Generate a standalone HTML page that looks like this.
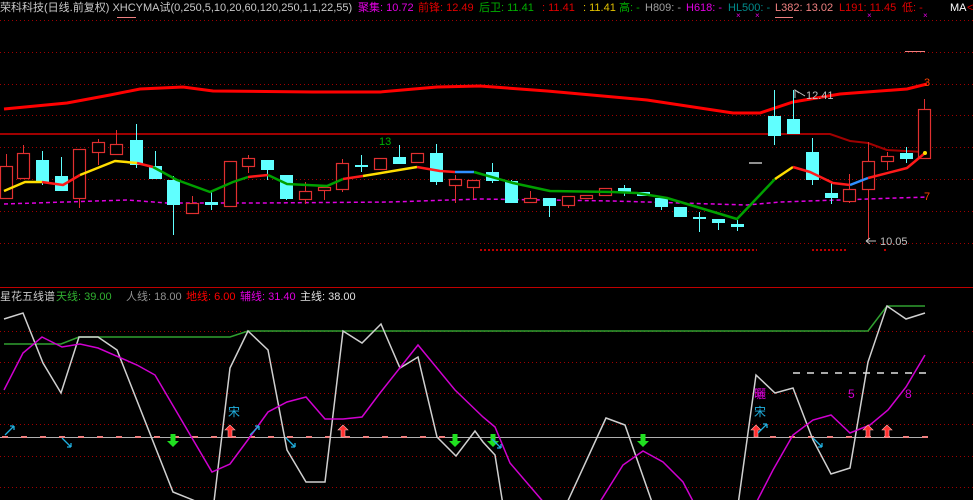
<!DOCTYPE html>
<html><head><meta charset="utf-8"><style>
html,body{margin:0;padding:0;background:#000;width:973px;height:500px;overflow:hidden}
.t{position:absolute;font-family:"Liberation Sans","Noto Sans CJK SC",sans-serif;font-size:11px;white-space:nowrap;line-height:14px}
svg{position:absolute;left:0;top:0}
</style></head><body>
<svg id="s" width="973" height="500" xmlns="http://www.w3.org/2000/svg">
<g stroke="#a00000" stroke-dasharray="1 3" stroke-width="1">
<line x1="0" y1="20.5" x2="973" y2="20.5"/><line x1="0" y1="52.5" x2="973" y2="52.5"/>
<line x1="0" y1="84.5" x2="973" y2="84.5"/><line x1="0" y1="115.5" x2="973" y2="115.5"/>
<line x1="0" y1="147.5" x2="973" y2="147.5"/><line x1="0" y1="179.5" x2="973" y2="179.5"/>
<line x1="0" y1="211.5" x2="973" y2="211.5"/><line x1="0" y1="243.5" x2="973" y2="243.5"/>
<line x1="0" y1="331.5" x2="973" y2="331.5"/><line x1="0" y1="362.5" x2="973" y2="362.5"/>
<line x1="0" y1="393.5" x2="973" y2="393.5"/><line x1="0" y1="424.5" x2="973" y2="424.5"/>
<line x1="0" y1="456.5" x2="973" y2="456.5"/><line x1="0" y1="487.5" x2="973" y2="487.5"/>
</g>
<g stroke="#c00000" stroke-width="2" stroke-dasharray="2 2">
<line x1="480" y1="250" x2="757" y2="250"/><line x1="812" y1="250" x2="848" y2="250"/><line x1="884" y1="250" x2="888" y2="250"/>
</g>
<line x1="905" y1="51.5" x2="925" y2="51.5" stroke="#f08080"/>
<line x1="0" y1="287.5" x2="973" y2="287.5" stroke="#c00000"/>
<polyline fill="none" stroke="#a00000" stroke-width="2" points="0,134 830,134 850,141 868,143 887,150 923,152"/>
<polyline fill="none" stroke="#ff0000" stroke-width="3" points="4,109 67,103 110,95 140,89 183,87 213,91 313,92 380,92 437,87 480,86 547,91 647,100 733,113 760,113 793,102 840,94 907,89 927,84"/>
<polyline fill="none" stroke="#e000e0" stroke-width="1.5" stroke-dasharray="4 3" points="4,204 127,200 167,203 260,203 390,202 480,199 613,201 680,203 747,205 780,202 927,197"/>
<g id="candles"></g>
<g fill="none" stroke-width="2.5" stroke-linejoin="round">
<polyline stroke="#ffdd00" points="4,191 25,182 42,182"/>
<polyline stroke="#ff1a1a" points="42,182 63,185 80,175"/>
<polyline stroke="#ffdd00" points="80,175 115,161 137,163"/>
<polyline stroke="#ff1a1a" points="137,163 153,167"/>
<polyline stroke="#00a000" points="153,167 177,180 210,192 233,182 248,177"/>
<polyline stroke="#ff1a1a" points="248,177 268,175"/>
<polyline stroke="#00a000" points="268,175 287,184 327,186 343,179"/>
<polyline stroke="#ff1a1a" points="343,179 363,176"/>
<polyline stroke="#ffdd00" points="363,176 417,167"/>
<polyline stroke="#ff1a1a" points="417,167 440,171 455,172"/>
<polyline stroke="#3090ff" points="455,172 474,172"/>
<polyline stroke="#00a000" points="474,172 513,183 550,191 613,192 637,193 667,198 737,219 775,179"/>
<polyline stroke="#ffdd00" points="775,179 793,167"/>
<polyline stroke="#ff1a1a" points="793,167 810,172 833,183 850,185"/>
<polyline stroke="#3090ff" points="850,185 868,178"/>
<polyline stroke="#ff1a1a" points="868,178 907,168 925,153"/>
</g>
<circle cx="925" cy="153" r="2" fill="#ffdd00"/>
<line x1="749" y1="163" x2="762" y2="163" stroke="#c0c0c0" stroke-width="1.5"/>
<path d="M795 98 v-8 l4 3 M795 90 l10 6" stroke="#c0c0c0" fill="none"/>
<path d="M866 241 l4 -3 M866 241 l4 3 M866 241 h10" stroke="#c0c0c0" fill="none"/>
<text x="379" y="145" fill="#00b000" font-family="Liberation Sans" font-size="11">13</text>
<text x="806" y="99" fill="#c0c0c0" font-family="Liberation Sans" font-size="11">12.41</text>
<text x="880" y="245" fill="#c0c0c0" font-family="Liberation Sans" font-size="11">10.05</text>
<text x="924" y="86" fill="#ff4000" font-family="Liberation Sans" font-size="11">3</text>
<text x="924" y="200" fill="#ff4000" font-family="Liberation Sans" font-size="11">7</text>
<line x1="117" y1="17.5" x2="136" y2="17.5" stroke="#f08080"/>
<line x1="775" y1="17.5" x2="793" y2="17.5" stroke="#f08080"/>
<g fill="#e000e0" font-size="8" font-family="Liberation Sans"><text x="736" y="18">×</text><text x="755" y="18">×</text><text x="867" y="18">×</text><text x="923" y="18">×</text></g>
<line x1="0" y1="437.5" x2="925" y2="437.5" stroke="#b0b0b0"/>
<g stroke="#f08080" stroke-width="2" id="dash"></g>
<polyline fill="none" stroke="#30a030" stroke-width="1.5" points="4,344 61,344 79,337 230,337 248,331 868,331 887,306 925,306"/>
<polyline fill="none" stroke="#d0d0d0" stroke-width="1.5" points="4,319 23,313 43,363 61,393 79,337 98,337 117,350 173,492 193,500 213,510 230,368 248,331 268,350 287,450 306,482 325,482 343,331 362,343 381,324 400,368 418,357 437,437 456,456 475,431 483,442 495,455 503,505 566,505 606,418 625,425 653,505 738,505 756,375 775,393 793,388 813,440 831,474 850,468 868,362 887,306 906,319 925,313"/>
<polyline fill="none" stroke="#d000d0" stroke-width="1.5" points="4,390 23,353 42,337 62,347 80,344 98,348 137,365 155,375 212,472 230,464 250,437 268,412 287,402 306,397 325,419 343,419 362,417 380,393 418,345 455,390 483,417 495,427 510,463 546,505 598,505 623,465 643,451 663,462 683,482 695,505 755,505 773,470 793,435 813,420 831,415 850,433 870,425 888,410 906,387 925,355"/>
<line x1="793" y1="373" x2="932" y2="373" stroke="#e0e0e0" stroke-width="1.5" stroke-dasharray="7 7"/>
<g id="arrows"></g>
<text x="228" y="416" fill="#20b0e0" font-size="12" font-family="Noto Sans CJK SC">宋</text>
<text x="754" y="416" fill="#20b0e0" font-size="12" font-family="Noto Sans CJK SC">宋</text>
<text x="754" y="398" fill="#e000e0" font-size="12" font-family="Noto Sans CJK SC">曬</text>
<text x="848" y="398" fill="#d000d0" font-size="12" font-family="Liberation Sans">5</text>
<text x="905" y="398" fill="#d000d0" font-size="12" font-family="Liberation Sans">8</text>
</svg>
<div class="t" style="left:0;top:1px;color:#c8c8c8">荣科科技(日线.前复权) XHCYMA试(0,250,5,10,20,60,120,250,1,1,22,55)</div>
<div class="t" style="left:358px;top:1px;color:#e000e0">聚集: 10.72</div>
<div class="t" style="left:418px;top:1px;color:#e00000">前锋: 12.49</div>
<div class="t" style="left:479px;top:1px;color:#00b000">后卫: 11.41</div>
<div class="t" style="left:542px;top:1px;color:#e00000">: 11.41</div>
<div class="t" style="left:583px;top:1px;color:#e0c000">: 11.41</div>
<div class="t" style="left:619px;top:1px;color:#00b000">高: -</div>
<div class="t" style="left:645px;top:1px;color:#a0a0a0">H809: -</div>
<div class="t" style="left:686px;top:1px;color:#e000e0">H618: -</div>
<div class="t" style="left:728px;top:1px;color:#008b8b">HL500: -</div>
<div class="t" style="left:775px;top:1px;color:#f08080">L382: 13.02</div>
<div class="t" style="left:839px;top:1px;color:#e00000">L191: 11.45</div>
<div class="t" style="left:902px;top:1px;color:#e00000">低: -</div>
<div class="t" style="left:950px;top:1px;color:#ffffff">MA</div>
<div class="t" style="left:967px;top:1px;color:#e00000">&lt;</div>
<div class="t" style="left:0;top:290px;color:#c8c8c8">星花五线谱</div>
<div class="t" style="left:56px;top:290px;color:#30b030">天线: 39.00</div>
<div class="t" style="left:126px;top:290px;color:#909090">人线: 18.00</div>
<div class="t" style="left:186px;top:290px;color:#ff0000">地线: 6.00</div>
<div class="t" style="left:240px;top:290px;color:#e000e0">辅线: 31.40</div>
<div class="t" style="left:300px;top:290px;color:#e0e0e0">主线: 38.00</div>
<script>
var C=[[0,'r',166,198,154,198],[17,'r',153,178,145,178],[36,'c',160,182,151,185],[55,'c',176,191,157,191],[73,'r',149,198,149,208],[92,'r',142,152,139,165],[110,'r',144,154,130,154],[130,'c',140,165,124,168],[149,'c',166,179,151,179],[167,'c',180,205,176,235],[186,'r',203,213,196,213],[205,'c',202,205,192,210],[224,'r',161,206,161,206],[242,'r',158,166,155,173],[261,'c',160,170,160,180],[280,'c',175,199,175,200],[299,'r',191,199,182,204],[318,'r',187,190,187,200],[336,'r',163,189,159,192],[355,'c',165,167,155,172],[374,'r',158,169,158,169],[393,'c',157,164,145,164],[411,'r',153,162,153,162],[430,'c',153,182,144,185],[449,'r',179,185,175,203],[467,'r',180,187,180,199],[486,'c',172,181,163,183],[505,'c',181,203,180,203],[524,'r',198,202,191,202],[543,'c',198,206,198,217],[562,'r',196,205,196,208],[580,'r',195,198,195,198],[599,'r',188,195,188,195],[618,'c',188,193,185,196],[637,'c',192,196,192,196],[655,'c',198,207,198,210],[674,'c',207,217,207,217],[693,'c',217,219,212,232],[712,'c',219,223,219,230],[731,'c',224,227,220,231],[768,'c',116,136,90,145],[787,'c',119,134,90,134],[806,'c',152,180,138,185],[825,'c',193,198,183,204],[843,'r',189,201,174,203],[862,'r',161,189,142,240],[881,'r',156,161,152,170],[900,'c',153,159,147,163],[918,'r',109,158,99,158]];
var s='';C.forEach(function(c){var x=c[0],cx=x+6.5,col=c[1]=='r'?'#e03030':'#60ffff';
s+='<line x1="'+cx+'" y1="'+c[4]+'" x2="'+cx+'" y2="'+c[5]+'" stroke="'+col+'"/>';
if(c[1]=='r')s+='<rect x="'+(x+0.5)+'" y="'+c[2]+'.5" width="12" height="'+(c[3]-c[2])+'" fill="#000" stroke="'+col+'" stroke-width="1.2"/>';
else s+='<rect x="'+x+'" y="'+c[2]+'" width="13" height="'+Math.max(2,c[3]-c[2])+'" fill="'+col+'"/>';});
document.getElementById('candles').innerHTML=s;
var d='';for(var x=2;x<445;x+=19)d+='<line x1="'+x+'" y1="437" x2="'+(x+6)+'" y2="437"/>';
for(var x=770;x<930;x+=19)d+='<line x1="'+x+'" y1="437" x2="'+(x+6)+'" y2="437"/>';
document.getElementById('dash').innerHTML=d;
var a='';[230,343,756,868,887].forEach(function(x){a+='<path d="M'+x+' 425 l-5 5 h3 v7 h4 v-7 h3 z" fill="#ff3030" stroke="#ffb0b0" stroke-width="0.6"/>';});
[173,455,493,643].forEach(function(x){a+='<path d="M'+x+' 447 l-6 -6 h3.5 v-7 h5 v7 h3.5 z" fill="#20e020"/>';});
[[10,430,1],[255,430,1],[763,428,1],[67,443,-1],[291,443,-1],[818,443,-1],[497,444,-1]].forEach(function(p){var x=p[0],y=p[1];
if(p[2]>0)a+='<path d="M'+(x-5)+' '+(y+5)+' L'+(x+4)+' '+(y-4)+' M'+(x+4)+' '+(y-4)+' h-4 M'+(x+4)+' '+(y-4)+' v4" stroke="#20b0e0" fill="none" stroke-width="1.3"/>';
else a+='<path d="M'+(x-5)+' '+(y-5)+' L'+(x+4)+' '+(y+4)+' M'+(x+4)+' '+(y+4)+' h-4 M'+(x+4)+' '+(y+4)+' v-4" stroke="#20b0e0" fill="none" stroke-width="1.3"/>';});
document.getElementById('arrows').innerHTML=a;
</script>
</body></html>
